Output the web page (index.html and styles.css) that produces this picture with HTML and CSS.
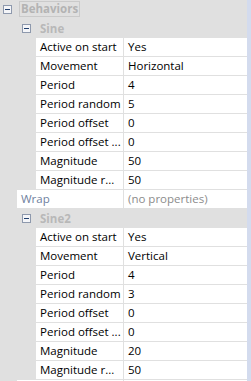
FILE: index.html
```html
<!DOCTYPE html>
<html lang="en">
<head>
    <meta charset="UTF-8">
    <meta name="viewport" content="width=device-width, initial-scale=1.0">
    <title>Behaviors</title>
    <link rel="stylesheet" href="styles.css">
</head>
<body>

    <div class="frame">
        <div class="grid">
            <!-- Kategori utama -->
            <div class="row cat">
                <svg class="toggle" width="9" height="9" viewBox="0 0 9 9">
                    <rect x="0.5" y="0.5" width="8" height="8" fill="#f4f5f8" stroke="#8e99ad"/>
                    <line x1="2" y1="4.5" x2="7" y2="4.5" stroke="#22406e"/>
                </svg>
                <span class="cat-label">Behaviors</span>
            </div>

            <div class="row sub">
                <svg class="toggle" width="9" height="9" viewBox="0 0 9 9">
                    <rect x="0.5" y="0.5" width="8" height="8" fill="#f4f5f8" stroke="#8e99ad"/>
                    <line x1="2" y1="4.5" x2="7" y2="4.5" stroke="#22406e"/>
                </svg>
                <span class="sub-label">Sine</span>
            </div>
            <div class="row prop"><span class="name">Active on start</span><span class="value">Yes</span></div>
            <div class="row prop"><span class="name">Movement</span><span class="value">Horizontal</span></div>
            <div class="row prop"><span class="name">Period</span><span class="value">4</span></div>
            <div class="row prop"><span class="name">Period random</span><span class="value">5</span></div>
            <div class="row prop"><span class="name">Period offset</span><span class="value">0</span></div>
            <div class="row prop"><span class="name">Period offset ...</span><span class="value">0</span></div>
            <div class="row prop"><span class="name">Magnitude</span><span class="value">50</span></div>
            <div class="row prop"><span class="name">Magnitude r...</span><span class="value">50</span></div>

            <div class="row wrap"><span class="wrap-name">Wrap</span><span class="value muted">(no properties)</span></div>

            <div class="row sub">
                <svg class="toggle" width="9" height="9" viewBox="0 0 9 9">
                    <rect x="0.5" y="0.5" width="8" height="8" fill="#f4f5f8" stroke="#8e99ad"/>
                    <line x1="2" y1="4.5" x2="7" y2="4.5" stroke="#22406e"/>
                </svg>
                <span class="sub-label">Sine2</span>
            </div>
            <div class="row prop"><span class="name">Active on start</span><span class="value">Yes</span></div>
            <div class="row prop"><span class="name">Movement</span><span class="value">Vertical</span></div>
            <div class="row prop"><span class="name">Period</span><span class="value">4</span></div>
            <div class="row prop"><span class="name">Period random</span><span class="value">3</span></div>
            <div class="row prop"><span class="name">Period offset</span><span class="value">0</span></div>
            <div class="row prop"><span class="name">Period offset ...</span><span class="value">0</span></div>
            <div class="row prop"><span class="name">Magnitude</span><span class="value">20</span></div>
            <div class="row prop"><span class="name">Magnitude r...</span><span class="value">50</span></div>

            <div class="row wrap"><span class="wrap-name"></span><span class="value"></span></div>
        </div>
        <div class="scroll"></div>
    </div>

</body>
</html>
```

FILE: styles.css
```css
body {
    margin: 0;
    font-family: "Open Sans", Arial, sans-serif;
    font-size: 11.5px;
    color: #000;
}
.frame {
    display: flex;
    height: 381px;
    overflow: hidden;
    background-color: #e0e0e0;
}
.grid {
    width: 247px;
    display: flex;
    flex-direction: column;
    gap: 1px;
}
.scroll {
    width: 4px;
    background-color: #d3dbee;
}
.row {
    display: flex;
    align-items: center;
    height: 18px;
    flex-shrink: 0;
}
.toggle {
    display: block;
    flex-shrink: 0;
}
.cat {
    padding-left: 3px;
}
.cat-label {
    margin-left: 7px;
    padding: 0 1px;
    height: 14px;
    line-height: 14px;
    border: 1px solid #cacaca;
    font-weight: bold;
    color: #b3b3b3;
}
.sub {
    padding-left: 22px;
}
.sub-label {
    margin-left: 9px;
    font-weight: bold;
    color: #b8b8b8;
}
.prop {
    margin-left: 36px;
    gap: 1px;
}
.wrap {
    margin-left: 17px;
    gap: 1px;
}
.name,
.wrap-name,
.value {
    height: 18px;
    line-height: 18px;
    background-color: #fff;
    white-space: nowrap;
    overflow: hidden;
    padding-left: 4px;
}
.name {
    width: 83px;
}
.wrap-name {
    width: 102px;
    color: #6f7fa0;
}
.value {
    flex: 1;
}
.muted {
    color: #8c8c8c;
}
```
